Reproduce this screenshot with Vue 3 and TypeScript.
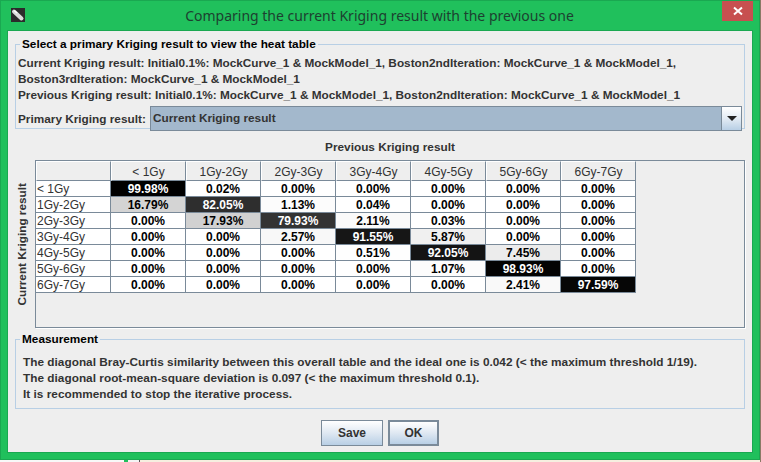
<script setup lang="ts">
const headers = ['< 1Gy', '1Gy-2Gy', '2Gy-3Gy', '3Gy-4Gy', '4Gy-5Gy', '5Gy-6Gy', '6Gy-7Gy']
const values: string[][] = [
  ['99.98', '0.02', '0.00', '0.00', '0.00', '0.00', '0.00'],
  ['16.79', '82.05', '1.13', '0.04', '0.00', '0.00', '0.00'],
  ['0.00', '17.93', '79.93', '2.11', '0.03', '0.00', '0.00'],
  ['0.00', '0.00', '2.57', '91.55', '5.87', '0.00', '0.00'],
  ['0.00', '0.00', '0.00', '0.51', '92.05', '7.45', '0.00'],
  ['0.00', '0.00', '0.00', '0.00', '1.07', '98.93', '0.00'],
  ['0.00', '0.00', '0.00', '0.00', '0.00', '2.41', '97.59'],
]
function shade(v: string): string {
  const g = Math.round(255 * (1 - parseFloat(v) / 100))
  return `rgb(${g},${g},${g})`
}
function ink(v: string): string {
  return parseFloat(v) > 50 ? '#fff' : '#000'
}
</script>

<template>
  <div class="window">
    <div class="titlebar">
      <svg class="appicon" width="14" height="14" viewBox="0 0 14 14">
        <rect width="14" height="14" fill="#2b2b2b" />
        <path d="M3 3.5 L10.5 10.5" stroke="#dcdcdc" stroke-width="4" stroke-linecap="round" />
        <path d="M3 2.5 L6 5" stroke="#fff" stroke-width="1.5" />
      </svg>
      <div class="title">Comparing the current Kriging result with the previous one</div>
      <div class="close">
        <svg width="10" height="10" viewBox="0 0 10 10"><path d="M1 1.5 L9 8.5 M9 1.5 L1 8.5" stroke="#fff" stroke-width="2" /></svg>
      </div>
    </div>
    <div class="content">
      <fieldset class="group top">
        <legend>Select a primary Kriging result to view the heat table</legend>
        <div class="lines">
          <div>Current Kriging result: Initial0.1%: MockCurve_1 &amp; MockModel_1, Boston2ndIteration: MockCurve_1 &amp; MockModel_1,</div>
          <div>Boston3rdIteration: MockCurve_1 &amp; MockModel_1</div>
          <div>Previous Kriging result: Initial0.1%: MockCurve_1 &amp; MockModel_1, Boston2ndIteration: MockCurve_1 &amp; MockModel_1</div>
        </div>
        <div class="combo-row">
          <span class="combo-label">Primary Kriging result:</span>
          <div class="combo">
            <span class="combo-value">Current Kriging result</span>
            <span class="combo-btn"><i class="arrow"></i></span>
          </div>
        </div>
      </fieldset>

      <div class="heat-title">Previous Kriging result</div>
      <div class="heat">
        <div class="side"><span>Current Kriging result</span></div>
        <div class="pane">
          <div class="grid">
            <div class="hcell"></div>
            <div v-for="h in headers" :key="h" class="hcell">{{ h }}</div>
            <template v-for="(row, r) in values" :key="r">
              <div class="rowhead">{{ headers[r] }}</div>
              <div
                v-for="(v, c) in row"
                :key="c"
                class="cell"
                :style="{ background: shade(v), color: ink(v) }"
              >{{ v }}%</div>
            </template>
          </div>
        </div>
      </div>

      <fieldset class="group measure">
        <legend>Measurement</legend>
        <div class="lines">
          <div>The diagonal Bray-Curtis similarity between this overall table and the ideal one is 0.042 (&lt; the maximum threshold 1/19).</div>
          <div>The diagonal root-mean-square deviation is 0.097 (&lt; the maximum threshold 0.1).</div>
          <div>It is recommended to stop the iterative process.</div>
        </div>
      </fieldset>

      <div class="buttons">
        <button class="btn save">Save</button>
        <button class="btn ok">OK</button>
      </div>
    </div>
  </div>
</template>

<style>
html, body { margin: 0; }
html {
  background: linear-gradient(90deg,
    #f8f8f8 0, #f8f8f8 124px,
    #20c05c 124px, #20c05c 128px,
    #f4f4f4 128px, #f4f4f4 139px,
    #555 139px, #555 140px,
    #f6efe0 140px, #f6efe0 760px,
    #8a7a66 760px);
}
</style>

<style scoped>
.window {
  width: 760px;
  height: 460px;
  box-sizing: border-box;
  background: #20c05c;
  box-shadow: inset 0 0 0 1px #1aa851;
  padding: 0 8px 8px 8px;
  display: flex;
  flex-direction: column;
  font-family: "Liberation Sans", Arial, sans-serif;
  overflow: hidden;
}
.titlebar {
  height: 31px;
  flex: none;
  position: relative;
  display: flex;
  align-items: center;
  justify-content: center;
}
.appicon { position: absolute; left: 3px; top: 8px; }
.title {
  font-family: "Noto Sans", sans-serif;
  font-size: 14px;
  color: #1d4030;
  margin-top: -1px;
  margin-left: -1px;
}
.close {
  position: absolute;
  right: -1px;
  top: 1px;
  width: 31px;
  height: 20px;
  background: #c75050;
  display: flex;
  align-items: center;
  justify-content: center;
}
.content {
  flex: 1;
  background: #eeeeee;
  box-shadow: 0 0 0 1px #1aa851;
  padding: 6px 7px 0 7px;
  display: flex;
  flex-direction: column;
  min-height: 0;
}
.group {
  margin: 0;
  border: 1px solid #b8cfe5;
  padding: 0;
  min-width: 0;
}
.group legend {
  font-size: 11.8px;
  font-weight: 700;
  color: #000;
  padding: 0 2px;
  margin-left: 4px;
  line-height: 14px;
}
.lines {
  font-size: 11.8px;
  font-weight: 700;
  color: #333;
  line-height: 16px;
}
.top { height: 92px; box-sizing: border-box; flex: none; }
.top .lines { padding: 4px 0 0 2px; }
.combo-row {
  display: flex;
  align-items: center;
  margin: 3px 2px 0 2px;
}
.combo-label { font-size: 11.8px; font-weight: 700; color: #333; width: 132px; flex: none; }
.combo {
  flex: 1;
  height: 25px;
  box-sizing: border-box;
  border: 1px solid #7a8a99;
  display: flex;
  background: #a3b8cc;
}
.combo-value {
  flex: 1;
  font-size: 11.8px;
  font-weight: 700;
  color: #333;
  line-height: 23px;
  padding-left: 2px;
}
.combo-btn {
  width: 19px;
  border-left: 1px solid #7a8a99;
  background: linear-gradient(#fff, #e3ebf4 50%, #b8cfe5);
  display: flex;
  align-items: center;
  justify-content: center;
}
.arrow {
  border-left: 5px solid transparent;
  border-right: 5px solid transparent;
  border-top: 5px solid #222;
}
.heat-title {
  font-size: 11.8px;
  font-weight: 700;
  color: #333;
  text-align: center;
  height: 16px;
  line-height: 16px;
  margin-top: 10px;
  margin-left: 20px;
  flex: none;
}
.heat {
  display: flex;
  flex: none;
  height: 168px;
  margin-top: 5px;
}
.side {
  width: 20px;
  flex: none;
  display: flex;
  align-items: flex-start;
  justify-content: flex-start;
}
.side span {
  writing-mode: vertical-rl;
  transform: rotate(180deg);
  font-size: 11.8px;
  font-weight: 700;
  color: #333;
  margin-top: 23px;
  margin-left: 0;
}
.pane {
  flex: 1;
  border: 1px solid #7a8a99;
  box-shadow: 1px 1px 0 #fff;
  box-sizing: border-box;
}
.grid {
  display: grid;
  grid-template-columns: repeat(8, 75px);
  grid-template-rows: 20px repeat(7, 16px);
  font-size: 12px;
  width: 600px;
}
.hcell {
  box-sizing: border-box;
  border-right: 1px solid #7a8a99;
  border-bottom: 1px solid #7a8a99;
  border-top: 1px solid #fff;
  border-left: 1px solid #fff;
  background: #eeeeee;
  color: #333;
  text-align: center;
  line-height: 20px;
}
.rowhead {
  box-sizing: border-box;
  background: #fff;
  color: #333;
  border-right: 1px solid #7a8a99;
  border-bottom: 1px solid #7a8a99;
  line-height: 17px;
  padding-left: 1px;
  overflow: hidden;
}
.cell {
  box-sizing: border-box;
  border-right: 1px solid #7a8a99;
  border-bottom: 1px solid #7a8a99;
  text-align: center;
  font-weight: 700;
  line-height: 17px;
  overflow: hidden;
}
.measure {
  height: 77px;
  box-sizing: border-box;
  flex: none;
  margin-top: 4px;
}
.measure .lines { padding: 8px 0 0 7px; letter-spacing: 0.02px; }
.buttons {
  display: flex;
  justify-content: center;
  gap: 5px;
  margin-top: 11px;
}
.btn {
  height: 26px;
  box-sizing: border-box;
  font-family: inherit;
  font-size: 12px;
  font-weight: 700;
  color: #333;
  background: linear-gradient(#fff, #dfe8f2 50%, #b8cfe5);
  padding: 0;
}
.save { width: 62px; border: 1px solid #7a8a99; }
.ok { width: 51px; border: 2px solid #7a8a99; }
</style>
